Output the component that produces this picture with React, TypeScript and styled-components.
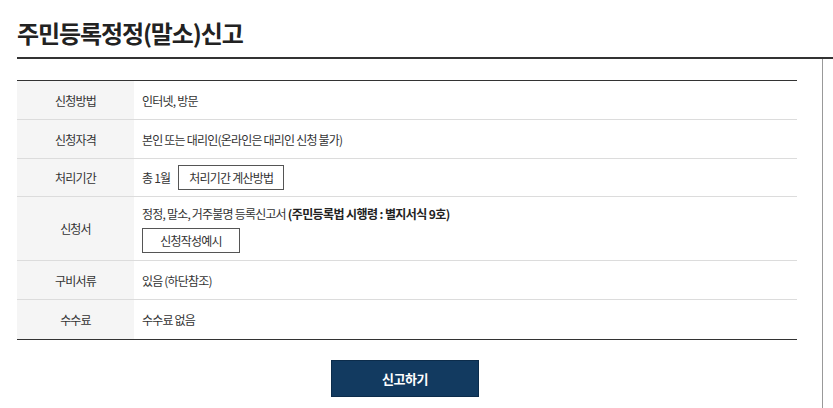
import styled, { createGlobalStyle } from "styled-components";

const GlobalStyle = createGlobalStyle`
  html, body {
    margin: 0;
    padding: 0;
    background: #fff;
  }
  body {
    font-family: "Noto Sans CJK KR", "Noto Sans", sans-serif;
    color: #333;
  }
`;

type Row = {
  label: string;
  height: number;
  content: React.ReactNode;
};

function getRows(): Row[] {
  return [
    { label: "신청방법", height: 39, content: "인터넷, 방문" },
    {
      label: "신청자격",
      height: 39,
      content: "본인 또는 대리인(온라인은 대리인 신청 불가)",
    },
    {
      label: "처리기간",
      height: 38,
      content: (
        <Inline>
          <span>총 1월</span>
          <SmallButton $w={106}>처리기간 계산방법</SmallButton>
        </Inline>
      ),
    },
    {
      label: "신청서",
      height: 64,
      content: (
        <Stack>
          <span>
            정정, 말소, 거주불명 등록신고서 <b>(주민등록법 시행령 : 별지서식 9호)</b>
          </span>
          <SmallButton $w={98}>신청작성예시</SmallButton>
        </Stack>
      ),
    },
    { label: "구비서류", height: 39, content: "있음 (하단참조)" },
    { label: "수수료", height: 39, content: "수수료 없음" },
  ];
}

export default function App() {
  const rows = getRows();
  return (
    <>
      <GlobalStyle />
      <Page>
        <Header>
          <Title>주민등록정정(말소)신고</Title>
        </Header>
        <Body>
          <Content>
            <InfoTable>
              {rows.map((row, i) => (
                <TableRow key={row.label} $h={row.height} $last={i === rows.length - 1}>
                  <Label>{row.label}</Label>
                  <Value>{row.content}</Value>
                </TableRow>
              ))}
            </InfoTable>
            <Actions>
              <SubmitButton>신고하기</SubmitButton>
            </Actions>
          </Content>
        </Body>
      </Page>
    </>
  );
}

const Page = styled.div`
  width: 833px;
  height: 408px;
  overflow: hidden;
  padding-left: 17px;
  box-sizing: border-box;
`;

const Header = styled.div`
  height: 57px;
  border-bottom: 2px solid #333;
  box-sizing: content-box;
  display: flex;
  align-items: flex-start;
`;

const Title = styled.h1`
  margin: 16px 0 0;
  font-size: 24px;
  font-weight: 700;
  letter-spacing: -1.1px;
  line-height: 34px;
  color: #222;
`;

const Body = styled.div`
  display: flex;
`;

const Content = styled.div`
  width: 806px;
  height: 360px;
  border-right: 1px solid #999;
  box-sizing: border-box;
  padding-top: 21px;
`;

const InfoTable = styled.div`
  width: 780px;
  border-top: 1px solid #333;
  border-bottom: 1px solid #333;
`;

const TableRow = styled.div<{ $h: number; $last: boolean }>`
  display: grid;
  grid-template-columns: 117px 1fr;
  height: ${(p) => p.$h}px;
  border-bottom: ${(p) => (p.$last ? "none" : "1px solid #dcdcdc")};
  box-sizing: border-box;
  font-size: 12px;
  letter-spacing: -0.8px;
`;

const Label = styled.div`
  background: #f5f5f5;
  display: flex;
  align-items: center;
  justify-content: center;
  color: #333;
`;

const Value = styled.div`
  display: flex;
  align-items: center;
  padding-left: 8px;
  color: #333;

  b {
    font-weight: 700;
    letter-spacing: -0.6px;
    color: #222;
  }
`;

const Inline = styled.div`
  display: flex;
  align-items: center;
  gap: 8px;
`;

const Stack = styled.div`
  display: flex;
  flex-direction: column;
  align-items: flex-start;
  gap: 6px;
`;

const SmallButton = styled.button<{ $w: number }>`
  width: ${(p) => p.$w}px;
  height: 25px;
  border: 1px solid #555;
  background: #fff;
  font-family: inherit;
  font-size: 12px;
  letter-spacing: -0.8px;
  color: #333;
  padding: 0;
  cursor: pointer;
`;

const Actions = styled.div`
  width: 780px;
  display: flex;
  justify-content: center;
  padding-top: 20px;
`;

const SubmitButton = styled.button`
  width: 148px;
  height: 37px;
  margin-left: -4px;
  background: #123a60;
  border: 1px solid #0c2c4b;
  color: #fff;
  font-family: inherit;
  font-size: 13px;
  font-weight: 700;
  letter-spacing: -0.5px;
  cursor: pointer;
`;
